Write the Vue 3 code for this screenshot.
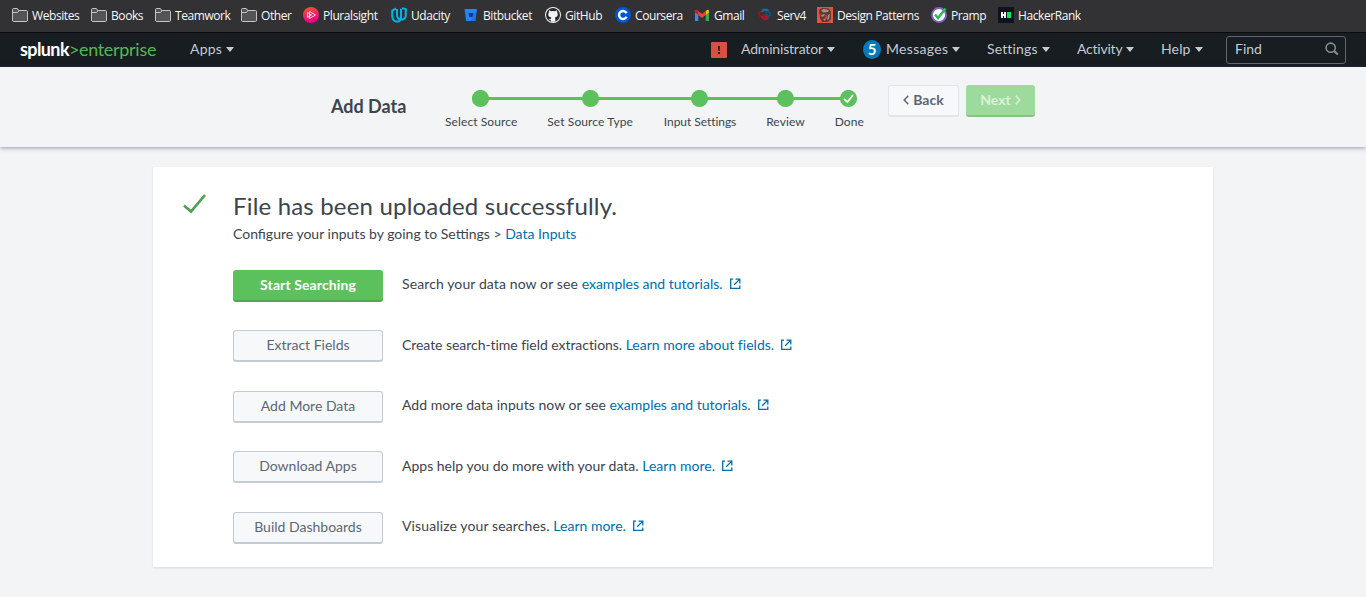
<script setup>
const bookmarks = [
  { label: 'Websites', icon: 'folder', w: 79 },
  { label: 'Books', icon: 'folder', w: 64 },
  { label: 'Teamwork', icon: 'folder', w: 86 },
  { label: 'Other', icon: 'folder', w: 62 },
  { label: 'Pluralsight', icon: 'pluralsight', w: 88 },
  { label: 'Udacity', icon: 'udacity', w: 72 },
  { label: 'Bitbucket', icon: 'bitbucket', w: 82 },
  { label: 'GitHub', icon: 'github', w: 70 },
  { label: 'Coursera', icon: 'coursera', w: 79 },
  { label: 'Gmail', icon: 'gmail', w: 63 },
  { label: 'Serv4', icon: 'serv', w: 60 },
  { label: 'Design Patterns', icon: 'patterns', w: 114 },
  { label: 'Pramp', icon: 'pramp', w: 67 },
  { label: 'HackerRank', icon: 'hackerrank', w: 90 },
]
const menus = ['Administrator', 'Messages', 'Settings', 'Activity', 'Help']
const steps = ['Select Source', 'Set Source Type', 'Input Settings', 'Review', 'Done']
const dots = [9, 119, 228, 314, 377]
const actions = [
  { button: 'Start Searching', text: 'Search your data now or see', link: 'examples and tutorials.', primary: true, tracking: 0.11, linkTracking: 0 },
  { button: 'Extract Fields', text: 'Create search-time field extractions.', link: 'Learn more about fields.', tracking: -0.05, linkTracking: 0.02 },
  { button: 'Add More Data', text: 'Add more data inputs now or see', link: 'examples and tutorials.', tracking: 0.04, linkTracking: 0 },
  { button: 'Download Apps', text: 'Apps help you do more with your data.', link: 'Learn more.', tracking: 0, linkTracking: 0.03 },
  { button: 'Build Dashboards', text: 'Visualize your searches.', link: 'Learn more.', tracking: 0.12, linkTracking: 0 },
]
</script>

<template>
  <div class="page">
    <div class="bookmarks">
      <div v-for="b in bookmarks" :key="b.label" class="bookmark" :style="{ width: b.w + 'px' }">
        <svg class="fav" viewBox="0 0 16 16">
          <g v-if="b.icon === 'folder'">
            <path d="M.5 13V2.500Q.5 1.500 1.500 1.500H5Q6 1.500 6.500 3.500H14.500Q15.500 3.500 15.500 4.500V13Q15.500 14.500 14.500 14.500H1.500Q.5 14.500 .5 13Z" fill="#545456" stroke="#c4c4c5" />
            <path d="M1 5.500H5.500L7 3.500" fill="none" stroke="#c4c4c5" />
          </g>
          <g v-else-if="b.icon === 'pluralsight'">
            <defs><linearGradient id="ps" x1="0" y1="0" x2="0.3" y2="1"><stop stop-color="#f15b2a" /><stop offset="1" stop-color="#ec008c" /></linearGradient></defs>
            <circle cx="8" cy="8" r="8" fill="url(#ps)" />
            <path d="M6.500 4.500L12.500 8L6.500 11.500ZM4.500 5.500V10.500L8.500 8Z" fill="none" stroke="#ffd9e2" stroke-width="1" />
          </g>
          <g v-else-if="b.icon === 'udacity'" fill="none" stroke="#02b3e4" stroke-width="2">
            <path d="M5 1.500L1.200 3.500V9C1.200 13 4 15 7 14.500C9 14.200 10 12.500 10 10V1.800" />
            <path d="M6 2V8C6 11 8 12.500 11 12.500C13.500 12.300 14.800 10.500 14.800 8V2L11 1.300" />
          </g>
          <g v-else-if="b.icon === 'bitbucket'">
            <path d="M1.500 2H14L12.300 14H3.200Z" fill="#2684ff" /><path d="M5.500 6H10.200L9.600 10H6.200Z" fill="#183b78" />
            <path d="M10.500 6H13.400L12.300 14H8Z" fill="#1868e0" opacity=".6" />
          </g>
          <g v-else-if="b.icon === 'github'">
            <circle cx="8" cy="8" r="8" fill="#f4f4f4" /><circle cx="8" cy="8" r="7" fill="#29292b" />
            <path d="M4 3.300L6 4.200Q8 3.700 10 4.200L12 3.300L12.200 5.400Q13 6.600 12.700 8.200Q12.200 10.200 9.800 10.500Q10.300 11 10.300 12V14.800H5.900V13Q4.200 13.400 3.500 11.800Q4.500 12 5 12.300L6 11.800Q6 10.800 6.400 10.500Q3.700 10.200 3.300 8.200Q3 6.600 3.900 5.400Z" fill="#f4f4f4" />
          </g>
          <g v-else-if="b.icon === 'coursera'">
            <circle cx="8" cy="8" r="8" fill="#0056d2" /><path d="M11.600 6.200A4 4 0 1 0 11.600 9.800" fill="none" stroke="#fff" stroke-width="2.400" />
          </g>
          <g v-else-if="b.icon === 'gmail'">
            <path d="M1 3V14H4.300V6Z" fill="#4285f4" /><path d="M15 3V14H11.700V6Z" fill="#34a853" />
            <path d="M11.700 8V4L13 3Q15 2 15 4.500V5.500Z" fill="#fbbc04" />
            <path d="M1 5.500V4.500Q1 2 3 3L8 7L11.700 4V8L8 11L4.300 8Z" fill="#ea4335" /><path d="M1 5.500V4.500Q1 2 3 3L4.300 4V8Z" fill="#c5221f" />
          </g>
          <g v-else-if="b.icon === 'serv'" fill="none" stroke-width="2.200">
            <path d="M5 4.500Q1 5 2 8Q3.500 10.500 6.500 8.500L8 7.500" stroke="#8c1720" /><path d="M5 9Q6.500 13.500 10.500 11.500L8 8.500" stroke="#ae1826" />
            <path d="M5 5Q6.500 1.500 10 3L11.500 4" stroke="#176fa0" /><path d="M8 6Q11 3.500 13 6Q14 8.500 11.500 9.500L9 7" stroke="#174e78" />
          </g>
          <g v-else-if="b.icon === 'patterns'">
            <path d="M0 0H16V16H0Z" fill="#e3543f" /><path d="M2 3L5 1L12 1.500L14 5V12L11 15H5L3 11Z" fill="#5d3a34" />
            <path d="M4 3L7 2L12 3L11 5L6 5.500ZM4 8L8 7L7 9L5 10ZM11 8L13 7L12 12L10 13ZM6 12L9 11L8 14Z" fill="#a48f87" />
            <path d="M8 8H10V12H8ZM2 6L4 7L3 9Z" fill="#c93b2c" />
          </g>
          <g v-else-if="b.icon === 'pramp'">
            <circle cx="8" cy="8" r="7" fill="#fff" stroke="#8063c0" stroke-width="1.900" /><path d="M4 7.500L7 11L14.500 1.500" fill="none" stroke="#26bd55" stroke-width="2.500" />
          </g>
          <g v-else>
            <path d="M0 0H16V16H0Z" fill="#0d141e" /><path d="M3 5H4.900V7H6V5H8V11H6V9H4.900V11H3Z" fill="#fff" /><path d="M9 5H13V11H9Z" fill="#00ea64" />
          </g>
        </svg>
        <span>{{ b.label }}</span>
      </div>
    </div>

    <nav class="nav">
      <div class="brand"><b>splunk</b><span class="gt">&gt;</span><span class="edition">enterprise</span></div>
      <div class="menu apps"><span>Apps</span><i class="caret"></i></div>
      <div class="right">
        <svg class="alert" viewBox="0 0 16 16"><rect width="16" height="16" rx="1" fill="#dc4e41" /><path d="M7 4H9L8.700 9H7.300ZM7 10H9V12H7Z" fill="#2b1d20" /></svg>
        <div v-for="m in menus" :key="m" class="menu" :class="m.toLowerCase()">
          <span v-if="m === 'Messages'" class="count">5</span><span>{{ m }}</span><i class="caret"></i>
        </div>
        <div class="find">
          <span>Find</span>
          <svg width="14" height="14" viewBox="0 0 14 14" fill="none" stroke="#818d99"><circle cx="5.700" cy="5.700" r="4.600" stroke-width="1.600" /><path d="M9 9L12.800 12.500" stroke-width="2.200" /></svg>
        </div>
      </div>
    </nav>

    <header class="wizard">
      <h1>Add Data</h1>
      <div class="progress">
        <svg class="track" width="386" height="18" viewBox="0 0 386 18">
          <path d="M9 8.500H377" stroke="#5cc05c" stroke-width="3" />
          <circle v-for="x in dots" :key="x" :cx="x - 0.5" cy="8.500" r="8.600" fill="#5cc05c" />
          <path d="M372 9L375.500 12L381 5" fill="none" stroke="#fff" stroke-width="1.800" />
        </svg>
        <div class="steps"><span v-for="s in steps" :key="s">{{ s }}</span></div>
      </div>
      <button class="btn back">
        <svg width="6" height="10" viewBox="0 0 6 10"><path d="M5.300 .8L1.200 5L5.300 9.200" /></svg><span>Back</span>
      </button>
      <button class="btn next">
        <span>Next</span><svg width="6" height="10" viewBox="0 0 6 10"><path d="M.7 .8L4.800 5L.7 9.200" /></svg>
      </button>
    </header>

    <main class="panel">
      <svg class="done" width="24" height="20" viewBox="0 0 24 20"><path d="M1 11.500L8 17.500L22 1" fill="none" stroke="#4fa054" stroke-width="2.700" /></svg>
      <div class="content">
        <h2>File has been uploaded successfully.</h2>
        <p class="sub">Configure your inputs by going to Settings &gt; <a>Data Inputs</a></p>
        <div class="actions">
          <div v-for="a in actions" :key="a.button" class="action">
            <button class="btn" :class="{ primary: a.primary }">{{ a.button }}</button>
            <p :style="{ letterSpacing: a.tracking + 'px' }">{{ a.text }} <a :style="{ letterSpacing: a.linkTracking + 'px' }">{{ a.link }}<svg class="ext" width="11" height="11" viewBox="0 0 11 11" fill="none" stroke="#006eaa" stroke-width="1.300"><path d="M3 1.200H.7V10.300H9.800V7.500M5.500 1.200H9.800V5.500M9.600 1.400L4.200 6.700" /></svg></a></p>
          </div>
        </div>
      </div>
    </main>
  </div>
</template>

<style>
body { margin: 0; background: #f2f4f5; }
</style>
<style scoped>
.page { height: 597px; overflow: hidden; background: #f2f4f5; color: #3c444d; font: 14px/20px Lato, "Liberation Sans", sans-serif; }
* { box-sizing: border-box; }
h1, h2, p { margin: 0; font-weight: 400; }
svg { display: block; flex: none; }
a { color: #006eaa; }
.bookmarks { display: flex; height: 33px; padding: 7px 0 0 12px; background: #323234; border-bottom: 1px solid #0c0c0d; color: #f7f7f8; font: 12px/17px "Open Sans", "Noto Sans", sans-serif; letter-spacing: -0.42px; }
.bookmark { display: flex; gap: 4px; flex: none; height: 17px; white-space: nowrap; }
.fav { width: 16px; height: 16px; overflow: visible; }
.nav { display: flex; align-items: center; height: 34px; padding: 0 20px; background: #171d21; color: #c3cbd4; }
.brand { display: flex; width: 170px; padding-bottom: 2px; font-size: 18px; line-height: 22px; letter-spacing: -0.6px; color: #fff; }
.gt { width: 10px; color: #53b853; }
.edition { color: #53b853; letter-spacing: -0.3px; }
.menu { display: flex; align-items: center; padding-bottom: 2px; }
.caret { width: 0; height: 0; margin-left: 4px; border: 4px solid transparent; border-top: 5px solid #c3cbd4; border-bottom: 0; }
.right { display: grid; grid-template-columns: 30px 122px 124px 90px 84px 65px 120px; align-items: center; margin-left: auto; }
.alert { width: 16px; height: 16px; }
.apps { letter-spacing: 0.2px; }
.administrator { letter-spacing: -0.18px; }
.messages { letter-spacing: 0.3px; }
.settings { letter-spacing: 0.15px; }
.activity { letter-spacing: -0.22px; }
.help { letter-spacing: 0.15px; }
.count { width: 18px; height: 19px; margin-right: 5px; border-radius: 50%; background: #007abd; color: #fff; text-align: center; line-height: 19px; font-size: 15px; font-weight: 700; letter-spacing: 0; }
.find { display: flex; justify-content: space-between; align-items: center; height: 28px; padding: 0 6px 2px 8px; border: 1px solid #5c6773; border-radius: 3px; }
.wizard { display: flex; align-items: flex-start; height: 80px; padding-left: 331px; box-shadow: 0 1px 4px rgba(60, 75, 90, .5); }
h1 { width: 114px; padding-top: 27px; font-size: 18px; line-height: 24px; font-weight: 700; }
.progress { width: 443px; padding-top: 23px; }
.track { margin-left: 27px; }
.steps { display: flex; justify-content: space-between; width: 419px; padding-top: 5px; font-size: 12px; line-height: 17px; letter-spacing: 0.1px; white-space: nowrap; }
.steps span:nth-child(3) { margin-left: 1px; letter-spacing: -0.05px; }
.btn { display: flex; align-items: center; justify-content: center; flex: none; height: 32px; margin: 0; padding: 0 0 1px; font: 14px/20px Lato, "Liberation Sans", sans-serif; color: #5c6773; background: #f7f8fa; border: 1px solid #c3cbd4; border-bottom-width: 2px; border-radius: 3px; }
.back, .next { margin-top: 18px; gap: 4px; font-weight: 700; }
.back { width: 71px; border-color: #e1e6eb; }
.next { width: 69px; margin-left: 7px; color: #d9f2d9; background: #9eda9e; border: 0; border-bottom: 2px solid #87c487; }
.btn svg { fill: none; stroke: currentColor; stroke-width: 1.500; }
.panel { display: flex; width: 1060px; height: 400px; margin: 20px auto 0; padding: 24px 30px 0; background: #fff; box-shadow: 0 1px 2px rgba(60, 75, 90, .14); }
.done { margin: 3px 26px 0 0; }
h2 { font-size: 24px; line-height: 30px; letter-spacing: 0.18px; }
.sub { margin-top: 3px; }
.actions { display: flex; flex-direction: column; gap: 28.5px; margin-top: 25.8px; }
.action { display: flex; height: 32px; white-space: nowrap; }
.action .btn { width: 150px; }
.action .primary { padding: 0; color: #fff; font-weight: 700; background: #5cc05c; border: 0; border-bottom: 2px solid #4fa84f; letter-spacing: 0.1px; }
.action p { margin-left: 19px; padding-top: 4.500px; }
.ext { display: inline-block; margin-left: 7px; }
</style>
